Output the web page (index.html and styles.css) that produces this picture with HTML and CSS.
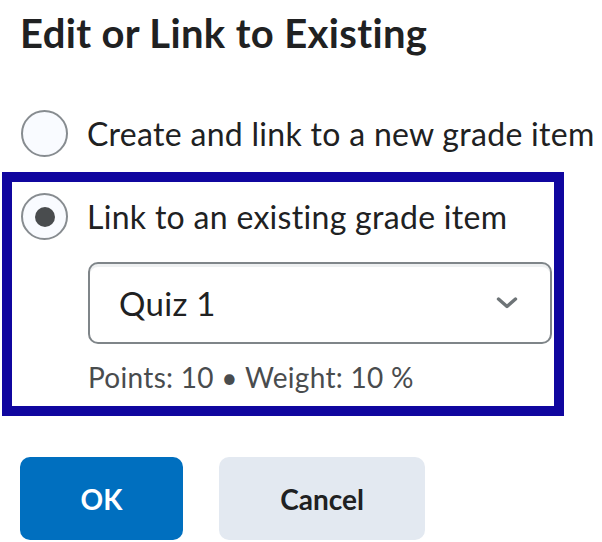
FILE: index.html
```html
<!DOCTYPE html>
<html lang="en">
<head>
<meta charset="utf-8">
<title>Edit or Link to Existing</title>
<link rel="stylesheet" href="styles.css">
</head>
<body>
<div class="dialog">
  <h1 class="title">Edit or Link to Existing</h1>
  <label class="option option-first">
    <input type="radio" name="grade" class="radio">
    <span class="option-label">Create and link to a new grade item</span>
  </label>
  <div class="highlight">
    <label class="option">
      <input type="radio" name="grade" class="radio" checked>
      <span class="option-label">Link to an existing grade item</span>
    </label>
    <div class="details">
      <div class="select" role="combobox" aria-expanded="false">
        <span class="select-value">Quiz 1</span>
        <svg class="chevron" width="22" height="12" viewBox="0 0 22 12" aria-hidden="true">
          <path d="M2.5 2 L11 9.5 L19.5 2" fill="none" stroke="#6e7477" stroke-width="3.4" stroke-linecap="round" stroke-linejoin="round"/>
        </svg>
      </div>
      <div class="meta">Points: 10 • Weight: 10 %</div>
    </div>
  </div>
  <div class="actions">
    <button class="btn btn-primary" type="button">OK</button>
    <button class="btn btn-secondary" type="button">Cancel</button>
  </div>
</div>
</body>
</html>
```
FILE: styles.css
```css
* {
  box-sizing: border-box;
}

html, body {
  margin: 0;
  padding: 0;
  background: #ffffff;
  overflow: hidden;
}

body {
  font-family: Lato, "Open Sans", "Liberation Sans", sans-serif;
  color: #202122;
}

.dialog {
  display: flex;
  flex-direction: column;
  padding-top: 10px;
}

.title {
  margin: 0 0 0 20px;
  font-size: 40px;
  line-height: 46px;
  letter-spacing: 0.35px;
  font-weight: 700;
  color: #202122;
  white-space: nowrap;
}

.option {
  display: flex;
  align-items: center;
  cursor: pointer;
}

.option-first {
  margin: 54px 0 0 21px;
}

.radio {
  appearance: none;
  -webkit-appearance: none;
  margin: 0;
  flex: none;
  width: 47px;
  height: 47px;
  border: 2px solid #878c90;
  border-radius: 50%;
  background: #f9fbff;
  display: grid;
  place-items: center;
}

.radio:checked::after {
  content: "";
  width: 20px;
  height: 20px;
  border-radius: 50%;
  background: #494c4e;
}

.option-label {
  margin-left: 19px;
  font-size: 32px;
  line-height: 36px;
  letter-spacing: 0.3px;
  white-space: nowrap;
  color: #202122;
}

.highlight {
  margin: 15px 0 0 2px;
  width: 562px;
  border: 10px solid #10069f;
  padding: 11px 2px 13px 9px;
}

.details {
  margin-left: 67px;
  margin-top: 22px;
}

.select {
  height: 82px;
  border: 2px solid #7f8589;
  border-radius: 10px;
  box-shadow: inset 0 3px 0 0 rgba(177, 185, 190, 0.22);
  display: flex;
  align-items: center;
  justify-content: space-between;
  padding: 0 32px 0 29px;
  background: #ffffff;
}

.select-value {
  font-size: 33px;
  line-height: 38px;
  letter-spacing: 0.3px;
  color: #202122;
}

.chevron {
  display: block;
  flex: none;
}

.meta {
  margin-top: 17px;
  font-size: 28px;
  line-height: 32px;
  letter-spacing: 0.3px;
  color: #494c4e;
  white-space: nowrap;
}

.actions {
  display: flex;
  gap: 36px;
  margin: 41px 0 0 20px;
}

.btn {
  height: 83px;
  border: none;
  border-radius: 10px;
  font-family: Lato, "Open Sans", "Liberation Sans", sans-serif;
  font-size: 28px;
  font-weight: 700;
  cursor: pointer;
}

.btn-primary {
  width: 163px;
  background: #006fbf;
  color: #ffffff;
}

.btn-secondary {
  width: 206px;
  background: #e3e9f1;
  color: #202122;
}
```
